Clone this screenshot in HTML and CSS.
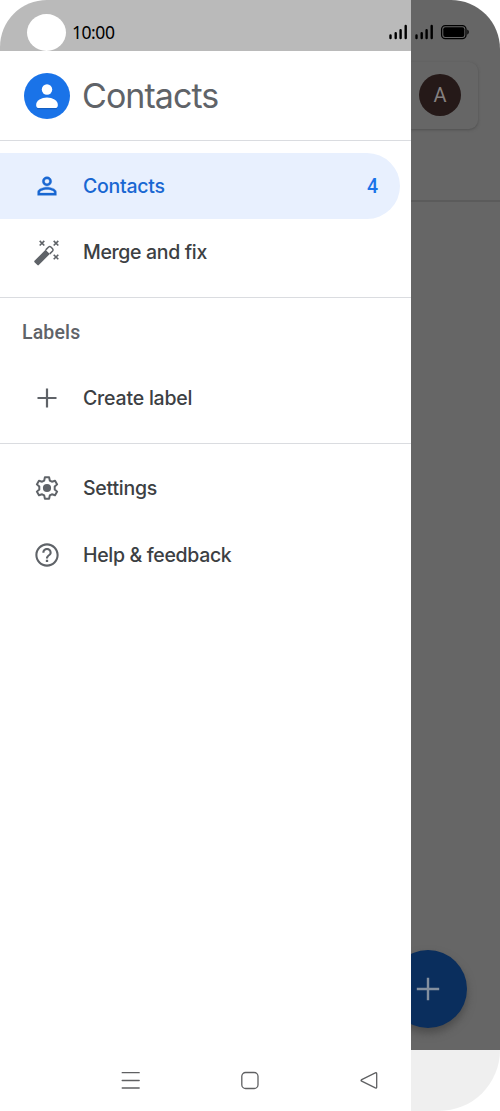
FILE: index.html
```html
<!DOCTYPE html>
<html lang="en">
<head>
<meta charset="utf-8">
<title>Contacts</title>
<link rel="stylesheet" href="styles.css">
</head>
<body>
<div class="phone">
  <div class="drawer">
    <div class="status">
      <span class="camera"></span>
      <span class="clock">10:00</span>
    </div>
    <header class="header">
      <svg class="logo" viewBox="0 0 46 46"><circle cx="23" cy="23" r="23" fill="#1a73e8"/><path d="M13 35.700h20" stroke="#155bb8" stroke-width="1"/><circle cx="23" cy="16.500" r="5.200" fill="#fff"/><path d="M12.200 31.500c0-4 5.300-6.900 10.800-6.900s10.800 2.900 10.800 6.900v.8a2.800 2.800 0 0 1-2.800 2.800H15a2.800 2.800 0 0 1-2.800-2.800z" fill="#fff"/></svg>
      <h1 class="title">Contacts</h1>
    </header>
    <nav class="group">
      <a class="row selected">
        <svg class="icon" viewBox="0 0 24 24"><path fill="currentColor" stroke="currentColor" stroke-width=".3" d="M12 5.900a2.100 2.100 0 1 1 0 4.200 2.100 2.100 0 0 1 0-4.200m0 9c2.970 0 6.100 1.460 6.100 2.100v1.100H5.900V17c0-.64 3.130-2.100 6.100-2.100M12 4C9.790 4 8 5.790 8 8s1.790 4 4 4 4-1.790 4-4-1.790-4-4-4zm0 9c-2.670 0-8 1.340-8 4v3h16v-3c0-2.660-5.330-4-8-4z"/></svg>
        <span class="label contacts">Contacts</span><span class="count">4</span>
      </a>
      <a class="row">
        <svg class="icon" viewBox="0 0 28 28"><path d="m1.500 22.800 11-11 4.300 4.300-11 11q-.7.600-1.400 0l-2.900-2.900q-.6-.7 0-1.400z" fill="currentColor"/><path d="m12.700 11.900 2.900-2.900q1.200-1 2.300 0l1.700 1.700q1 1.200 0 2.300l-2.900 2.900" fill="none" stroke="currentColor" stroke-width="1.500"/><path d="m6.700 2.900 4.600 4.600m0-4.600L6.700 7.500M20.700 2.900l4.600 4.600m0-4.600-4.600 4.600M20.700 16.700l4.600 4.600m0-4.600-4.600 4.600" fill="none" stroke="currentColor" stroke-width="1.600"/></svg>
        <span class="label merge">Merge and fix</span>
      </a>
    </nav>
    <section class="labels">
      <h2 class="subhead">Labels</h2>
      <a class="row">
        <svg class="icon" viewBox="0 0 28 28"><path d="M14 4.500v19M4.500 14h19" fill="none" stroke="currentColor" stroke-width="2.200"/></svg>
        <span class="label create">Create label</span>
      </a>
    </section>
    <nav class="group last">
      <a class="row">
        <svg class="icon" viewBox="0 0 24 24"><path fill="none" stroke="currentColor" stroke-width="1.700" stroke-linejoin="round" d="M10.200 2.800h3.600l.6 2.800 1.800 1 2.700-.8 1.800 3.100-2.100 1.900v2.400l2.100 1.900-1.800 3.100-2.700-.8-1.800 1-.6 2.800h-3.600l-.6-2.800-1.800-1-2.700.8-1.800-3.100 2.100-1.900v-2.400L3.300 8.900l1.800-3.100 2.700.8 1.800-1z"/><circle cx="12" cy="12" r="3.500" fill="currentColor"/></svg>
        <span class="label settings">Settings</span>
      </a>
      <a class="row">
        <svg class="icon" viewBox="0 0 24 24"><path fill="currentColor" d="M11 18h2v-2h-2v2zm1-16C6.480 2 2 6.480 2 12s4.480 10 10 10 10-4.480 10-10S17.520 2 12 2zm0 18.200c-4.520 0-8.200-3.680-8.200-8.200S7.480 3.800 12 3.800s8.200 3.680 8.200 8.200-3.680 8.200-8.200 8.200zM12 6c-2.210 0-4 1.790-4 4h1.800c0-1.210.99-2.200 2.200-2.200s2.200.99 2.200 2.200c0 2-3.100 1.750-3.100 5h1.800c0-2.250 3.100-2.500 3.100-5 0-2.210-1.790-4-4-4z"/></svg>
        <span class="label help">Help &amp; feedback</span>
      </a>
    </nav>
    <div class="navbar">
      <svg viewBox="0 0 20 20"><path d="M2.200 1.700h17M2.200 9.500h17M2.200 17h17"/></svg>
      <svg viewBox="0 0 20 20"><rect x="1.800" y="1.500" width="16.200" height="16" rx="3.800"/></svg>
      <svg viewBox="0 0 20 20"><path d="M2.700 8.600 16.300 1.900q1.400-.5 1.400 1v13q0 1.500-1.400 1L2.700 10.200q-1.300-.8 0-1.600z"/></svg>
    </div>
  </div>
  <div class="behind">
    <div class="search"><span class="avatar">A</span></div>
    <div class="canvas">
      <div class="fab"><svg viewBox="0 0 24 24"><path d="M12 .8v22.400M.8 12h22.400"/></svg></div>
    </div>
    <div class="footer"></div>
  </div>
  <svg class="signals" viewBox="0 0 82 18">
    <path d="M2.500 12.500v2.500M7.700 10.300V15M12.600 7.300V15M17.700 3V15M28.500 12.500v2.500M33.700 10.300V15M38.600 7.300V15M43.700 3V15" stroke="#000" stroke-width="2.400" stroke-linecap="round"/>
    <rect x="53.600" y="2.600" width="24.400" height="13" rx="3.700" fill="none" stroke="#000" stroke-width="1.300"/>
    <rect x="55.300" y="4.300" width="21" height="9.600" rx="2" fill="#000"/>
    <path d="M79.300 6.500q1.500.8 1.500 2.600t-1.500 2.600z" fill="#000"/>
  </svg>
</div>
</body>
</html>
```

FILE: styles.css
```css
* { box-sizing: border-box; }
body { margin: 0; background: #fff; font-family: Inter, "Liberation Sans", sans-serif; }
.phone { position: relative; display: flex; width: 500px; height: 1111px; overflow: hidden; border-radius: 47px 49px 61px 0; }
.drawer { width: 411px; height: 1111px; background: #fff; display: flex; flex-direction: column; }
.status { height: 51px; flex: none; background: #bababa; display: flex; align-items: flex-end; padding-left: 27px; overflow: hidden; }
.camera { flex: none; width: 39px; height: 37px; border-radius: 50%; background: #fff; }
.clock { margin-left: 6px; height: 31px; font: 17.500px/24px "Noto Sans", sans-serif; letter-spacing: -.45px; color: #000; }
.header { height: 90px; flex: none; display: flex; align-items: center; padding-left: 24px; border-bottom: 1px solid #dadce0; }
.logo { width: 46px; height: 46px; }
.title { margin: 0 0 0 12px; font-size: 34px; line-height: 46px; font-weight: 400; letter-spacing: -.95px; color: #5f6368; }
.group { height: 157px; flex: none; padding-top: 11.500px; border-bottom: 1px solid #dadce0; }
.row { height: 66.500px; display: flex; align-items: center; padding-left: 33px; color: #5f6368; }
.icon { width: 28px; height: 28px; flex: none; }
.label { margin-left: 22px; font-size: 19.500px; font-weight: 500; color: #3c4043; white-space: nowrap; }
.selected { width: 400px; border-radius: 0 33px 33px 0; background: #e8f0fe; color: #1967d2; }
.selected .label { color: #1967d2; }
.count { margin-left: auto; padding: 1px 22px 0 0; font: 500 19.500px Roboto, sans-serif; color: #1a73e8; }
.contacts { letter-spacing: -.25px; }
.merge { letter-spacing: -.35px; }
.create { letter-spacing: -.2px; }
.settings { letter-spacing: -.25px; }
.help { letter-spacing: -.33px; }
.labels { height: 146px; flex: none; border-bottom: 1px solid #dadce0; }
.subhead { margin: 0; height: 67px; padding: 4px 0 0 22px; font: 500 19.500px/62px Roboto, sans-serif; letter-spacing: .15px; color: #5f6368; }
.last { border: 0; padding-top: 11px; }
.navbar { margin-top: auto; height: 61px; display: flex; align-items: center; padding-left: 120px; gap: 99.500px; }
.navbar svg { width: 20px; height: 20px; fill: none; stroke: #5f6062; stroke-width: 1.300; stroke-linecap: round; }
.behind { width: 89px; display: flex; flex-direction: column; background: linear-gradient(#666 1050px, #efefef 1050px); overflow: hidden; }
.search { width: 67px; height: 67px; margin-top: 62px; padding: 12px 0 0 8px; flex: none; border-radius: 0 9px 9px 0; box-shadow: 0 1px 3px #505050; background: #666; }
.avatar { display: block; width: 42px; height: 42px; border-radius: 50%; background: #251918; color: #858080; text-align: center; font: 20px/43px Roboto, sans-serif; }
.canvas { position: relative; flex: 1; margin-top: 71px; border-top: 2px solid #5b5b5b; }
.fab { position: absolute; right: 33px; bottom: 22px; width: 78px; height: 78px; border-radius: 50%; background: #0a2e5d; box-shadow: 0 5px 9px #4b4b4b; display: flex; align-items: center; justify-content: center; }
.fab svg { width: 24px; height: 24px; fill: none; stroke: #84909f; stroke-width: 2.400; }
.footer { height: 61px; flex: none; }
.signals { position: absolute; left: 388px; top: 23px; width: 82px; height: 18px; }
```
